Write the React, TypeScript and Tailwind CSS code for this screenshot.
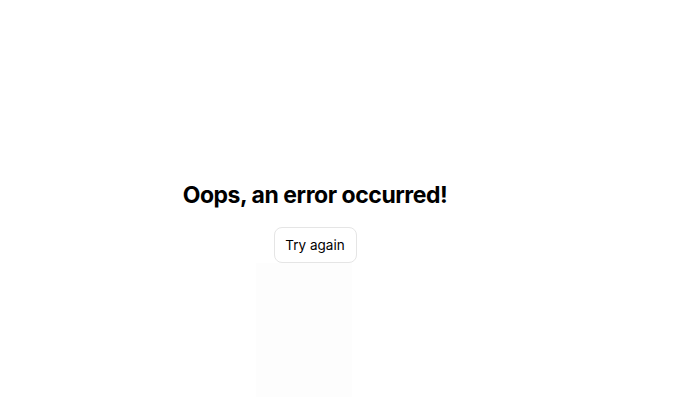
export default function App() {
  return (
    <div className="w-[684px] h-[397px] bg-white overflow-hidden" style={{ fontFamily: 'Inter, "Liberation Sans", sans-serif' }}>
      <div className="w-[630px] flex flex-col items-center pt-[179px]">
        <h1 className="text-[23px] leading-8 font-bold text-black tracking-[-0.45px]">Oops, an error occurred!</h1>
        <button className="mt-[16px] h-9 w-[83px] rounded-lg border border-[#e5e5e5] bg-white text-[13.5px] text-black">
          Try again
        </button>
        <div className="w-[96px] h-[140px] mr-[22px] bg-[#fdfdfd]" />
      </div>
    </div>
  );
}
